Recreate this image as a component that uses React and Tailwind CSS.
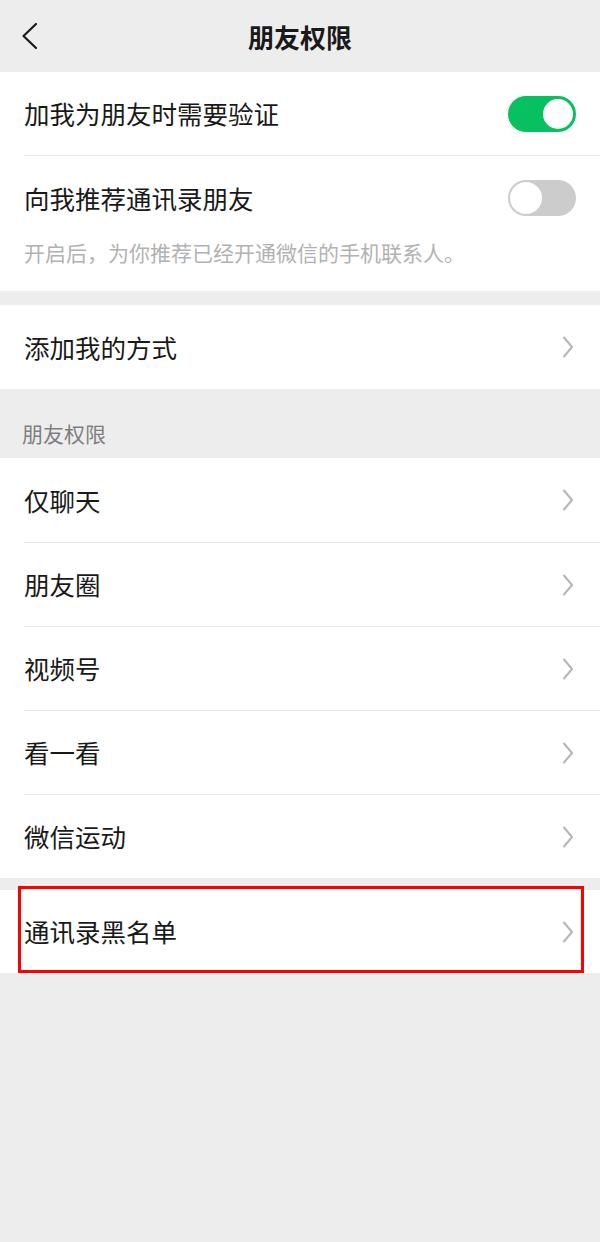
const font = { fontFamily: '"Noto Sans CJK SC", "Noto Sans", sans-serif' };

const Chevron = () => (
  <svg width="12" height="22" viewBox="0 0 12 22" fill="none" className="shrink-0">
    <path d="M2 1.5 L10 11 L2 20.5" stroke="#b5b5b5" strokeWidth="2" strokeLinecap="round" strokeLinejoin="round" />
  </svg>
);

const Toggle = ({ on }) =>
  on ? (
    <div className="w-[68px] h-[36px] rounded-full bg-[#07c160] flex items-center justify-end pr-[3px] shrink-0">
      <div className="w-[30px] h-[30px] rounded-full bg-white" />
    </div>
  ) : (
    <div className="w-[68px] h-[36px] rounded-full bg-[#cccccc] flex items-center pl-[2px] shrink-0">
      <div className="w-[32px] h-[32px] rounded-full bg-white" />
    </div>
  );

const LinkRow = ({ label, first }) => (
  <div className="pl-6 bg-white">
    <div
      className={
        "h-[84px] flex items-center justify-between pr-[26px] " +
        (first ? "" : "border-t border-[#e6e6e6]")
      }
    >
      <span className="text-[25.5px] text-[#191919]">{label}</span>
      <Chevron />
    </div>
  </div>
);

export default function App() {
  const perms = ["仅聊天", "朋友圈", "视频号", "看一看", "微信运动"];

  return (
    <div className="min-h-[1242px] bg-[#ededed] w-[600px]" style={font}>
      {/* nav */}
      <div className="h-[72px] flex items-center px-[20px]">
        <svg width="20" height="28" viewBox="0 0 20 28" fill="none" className="shrink-0">
          <path d="M16 2 L3.5 14 L16 26" stroke="#1a1a1a" strokeWidth="2.2" strokeLinecap="round" strokeLinejoin="round" />
        </svg>
        <div className="flex-1 text-center text-[26px] font-bold text-[#191919]">朋友权限</div>
        <div className="w-[20px]" />
      </div>

      {/* verification section */}
      <div className="bg-white pl-6">
        <div className="h-[84px] flex items-center justify-between pr-[24px] border-b border-[#e6e6e6]">
          <span className="text-[25.5px] text-[#191919]">加我为朋友时需要验证</span>
          <Toggle on />
        </div>
        <div className="pr-[24px] pb-[26px]">
          <div className="h-[84px] flex items-center justify-between">
            <span className="text-[25.5px] text-[#191919]">向我推荐通讯录朋友</span>
            <Toggle />
          </div>
          <div className="text-[21px] leading-[26px] text-[#b2b2b2] -mt-[1px]">
            开启后，为你推荐已经开通微信的手机联系人。
          </div>
        </div>
      </div>

      <div className="h-[14px]" />
      <LinkRow label="添加我的方式" first />

      <div className="h-[69px] flex items-end pl-[22px] pb-[9px]">
        <span className="text-[21px] text-[#7f7f7f]">朋友权限</span>
      </div>

      {perms.map((p, i) => (
        <LinkRow key={p} label={p} first={i === 0} />
      ))}

      <div className="h-[12px]" />
      <div className="relative">
        <div className="pl-6 bg-white">
          <div className="h-[83px] flex items-center justify-between pr-[26px]">
            <span className="text-[25.5px] text-[#191919]">通讯录黑名单</span>
            <Chevron />
          </div>
        </div>
        <div className="absolute top-[-4px] left-[18px] w-[566px] h-[87px] border-[3px] border-[#ff0000]" />
      </div>
    </div>
  );
}
